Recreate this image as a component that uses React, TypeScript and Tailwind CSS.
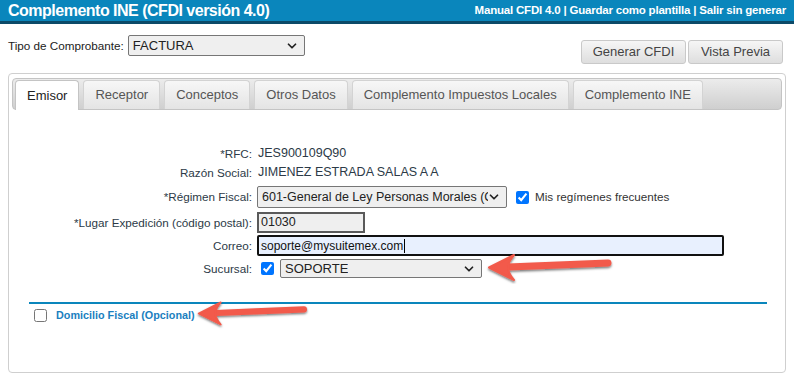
import { ChevronDown } from "lucide-react";

const tabs = [
  "Emisor",
  "Receptor",
  "Conceptos",
  "Otros Datos",
  "Complemento Impuestos Locales",
  "Complemento INE",
];

const Arrow = ({ className }: { className: string }) => (
  <svg className={className} viewBox="0 0 130 34" fill="none">
    <defs>
      <filter id="sh" x="-20%" y="-40%" width="140%" height="180%">
        <feDropShadow dx="0" dy="1.5" stdDeviation="1.2" floodColor="#000" floodOpacity="0.55" />
      </filter>
    </defs>
    <g filter="url(#sh)">
      <line x1="22" y1="17" x2="122" y2="13" stroke="#f25a4b" strokeWidth="7" strokeLinecap="round" />
      <path d="M3 17.5 L28 5 Q22 12 22 17 Q22 23 28 30 Z" fill="#f25a4b" stroke="#f25a4b" strokeWidth="2" strokeLinejoin="round" />
    </g>
  </svg>
);

const FakeSelect = ({ value, className }: { value: string; className: string }) => (
  <div className={`relative flex items-center border border-[#767676] bg-[#efefef] rounded-[2px] text-[#222] ${className}`}>
    <span className="pl-[4px] whitespace-nowrap overflow-hidden mr-[18px]">{value}</span>
    <ChevronDown size={14} strokeWidth={3} className="absolute right-[5px] text-[#222]" />
  </div>
);

export default function App() {
  return (
    <div className="relative w-[794px] h-[377px] bg-white overflow-hidden font-['Liberation_Sans',Arial,sans-serif] text-[#333]">
      {/* barra superior */}
      <div className="h-[24px] bg-[#0a86bc] border-b-[3px] border-[#0c4a68] flex items-center justify-between px-2">
        <span className="text-white font-bold text-[16px] tracking-[-0.5px]">Complemento INE (CFDI versión 4.0)</span>
        <span className="text-white font-bold text-[11.5px] tracking-[-0.2px]">
          Manual CFDI 4.0 | Guardar como plantilla | Salir sin generar
        </span>
      </div>

      <div className="flex justify-between pl-2 pr-[11px] pt-[11px]">
        <div className="flex items-center gap-[4px] h-[21px]">
          <span className="text-[11.7px] text-[#222]">Tipo de Comprobante:</span>
          <FakeSelect value="FACTURA" className="w-[177px] h-[21px] text-[13px]" />
        </div>
        <div className="flex gap-[2px] mt-[5px]">
          <button className="h-[24px] w-[105px] text-[13px] text-[#444] border border-[#c9c9c9] rounded-[3px] bg-gradient-to-b from-[#f6f6f6] to-[#dedede]">
            Generar CFDI
          </button>
          <button className="h-[24px] w-[95px] text-[13px] text-[#444] border border-[#c9c9c9] rounded-[3px] bg-gradient-to-b from-[#f6f6f6] to-[#dedede]">
            Vista Previa
          </button>
        </div>
      </div>

      {/* panel de pestañas */}
      <div className="mx-2 mt-[9px] h-[300px] border border-[#cfcfcf] rounded-[4px] pt-[4px] px-[3px]">
        <div className="h-[32px] border border-[#c4c4c4] rounded-[4px] bg-gradient-to-b from-[#ececec] to-[#cfcfcf] flex items-end gap-[4px] pl-[2px]">
          {tabs.map((t, i) => (
            <div
              key={t}
              className={
                i === 0
                  ? "h-[30px] -mb-[1px] px-[11px] flex items-center bg-white border border-b-0 border-[#c4c4c4] rounded-t-[4px] text-[13px] text-[#222]"
                  : "h-[29px] px-[11px] flex items-center bg-gradient-to-b from-[#f7f7f7] to-[#e4e4e4] border border-b-0 border-[#d3d3d3] rounded-t-[4px] text-[13px] text-[#555]"
              }
            >
              {t}
            </div>
          ))}
        </div>

        <div className="pt-[34px] text-[11.7px] text-[#2c3a47]">
          <div className="flex items-center h-[19px]">
            <span className="w-[240px] text-right">*RFC:</span>
            <span className="ml-[6px] text-[12.5px]">JES900109Q90</span>
          </div>
          <div className="flex items-center h-[19px]">
            <span className="w-[240px] text-right">Razón Social:</span>
            <span className="ml-[6px] text-[12.5px]">JIMENEZ ESTRADA SALAS A A</span>
          </div>
          <div className="flex items-center h-[22px] mt-[4px]">
            <span className="w-[240px] text-right">*Régimen Fiscal:</span>
            <FakeSelect value="601-General de Ley Personas Morales (CFDI" className="ml-[5px] w-[250px] h-[22px] text-[12.5px]" />
            <input type="checkbox" defaultChecked className="ml-[9px] w-[13px] h-[13px] accent-[#0075ff]" />
            <span className="ml-[6px] text-[#333]">Mis regímenes frecuentes</span>
          </div>
          <div className="flex items-center h-[21px] mt-[4px]">
            <span className="w-[240px] text-right">*Lugar Expedición (código postal):</span>
            <div className="ml-[5px] w-[108px] h-[21px] border-2 border-[#5a5a5a] bg-[#efefef] text-[12.5px] text-[#222] pl-[2px] flex items-center">
              01030
            </div>
          </div>
          <div className="flex items-center h-[21px] mt-[2px]">
            <span className="w-[240px] text-right">Correo:</span>
            <div className="ml-[5px] w-[467px] h-[21px] border-2 border-[#111] rounded-[2px] bg-[#e8f0fe] text-[12px] text-[#111] pl-[2px] flex items-center">
              soporte@mysuitemex.com
              <span className="w-px h-[14px] bg-black ml-[1px]" />
            </div>
          </div>
          <div className="flex items-center h-[19px] mt-[3px]">
            <span className="w-[240px] text-right">Sucursal:</span>
            <input type="checkbox" defaultChecked className="ml-[9px] w-[13px] h-[13px] accent-[#0075ff]" />
            <FakeSelect value="SOPORTE" className="ml-[6px] w-[202px] h-[19px] text-[13px]" />
          </div>

          <div className="mt-[24px] mx-[17px] mr-[15px] h-[2px] bg-[#0a86bc]" />
          <div className="flex items-center mt-[4px] ml-[22px] h-[14px]">
            <input type="checkbox" className="w-[13px] h-[13px]" />
            <span className="ml-[9px] font-bold text-[#1b7fc0] text-[10.8px]">Domicilio Fiscal (Opcional)</span>
          </div>
        </div>
      </div>

      <Arrow className="absolute left-[486px] top-[250px] w-[130px] h-[34px]" />
      <Arrow className="absolute left-[196px] top-[296px] w-[115px] h-[34px]" />
    </div>
  );
}
